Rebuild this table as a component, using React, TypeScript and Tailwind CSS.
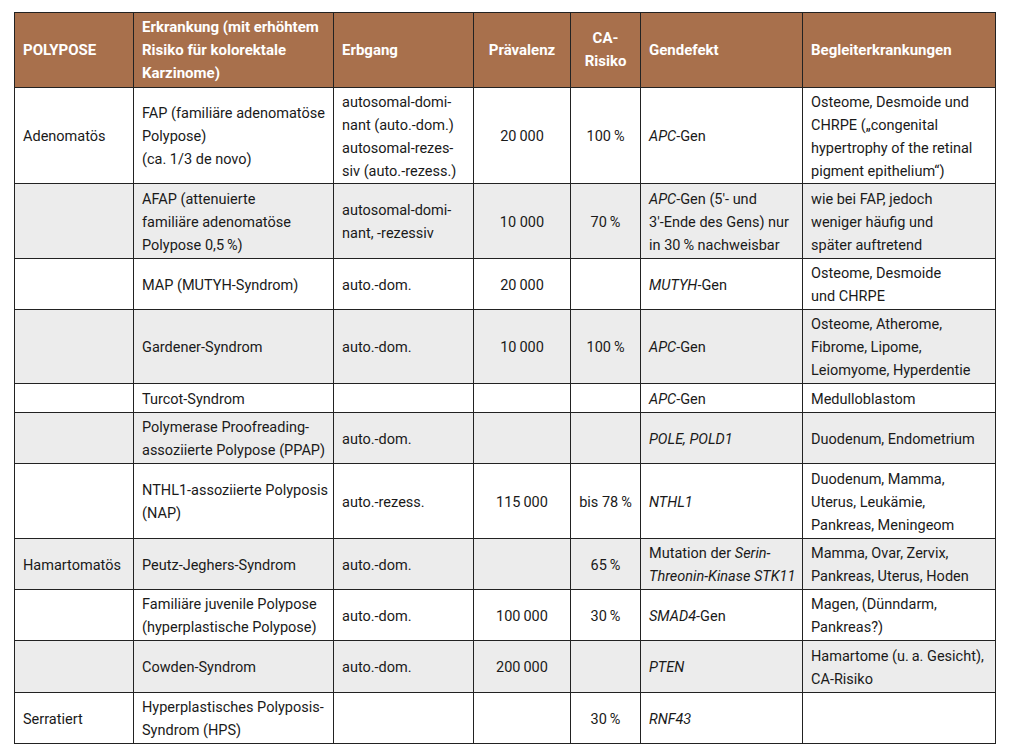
import type { ReactNode } from "react";

type Row = {
  h: number;
  gray: boolean;
  cells: ReactNode[];
};

const rows: Row[] = [
  {
    h: 96,
    gray: false,
    cells: [
      "Adenomatös",
      <>FAP (familiäre adenomatöse<br />Polypose)<br />(ca. 1/3 de novo)</>,
      <>autosomal-domi-<br />nant (auto.-dom.)<br />autosomal-rezes-<br />siv (auto.-rezess.)</>,
      "20\u2009000",
      "100\u2009%",
      <><i>APC</i>-Gen</>,
      <>Osteome, Desmoide und<br />CHRPE („congenital<br />hypertrophy of the retinal<br />pigment epithelium“)</>,
    ],
  },
  {
    h: 75,
    gray: true,
    cells: [
      "",
      <>AFAP (attenuierte<br />familiäre adenomatöse<br />Polypose 0,5&thinsp;%)</>,
      <>autosomal-domi-<br />nant, -rezessiv</>,
      "10 000",
      "70\u2009%",
      <><i>APC</i>-Gen (5'- und<br />3'-Ende des Gens) nur<br />in 30&thinsp;% nachweisbar</>,
      <>wie bei FAP, jedoch<br />weniger häufig und<br />später auftretend</>,
    ],
  },
  {
    h: 51,
    gray: false,
    cells: [
      "",
      "MAP (MUTYH-Syndrom)",
      "auto.-dom.",
      "20\u2009000",
      "",
      <><i>MUTYH</i>-Gen</>,
      <>Osteome, Desmoide<br />und CHRPE</>,
    ],
  },
  {
    h: 74,
    gray: true,
    cells: [
      "",
      "Gardener-Syndrom",
      "auto.-dom.",
      "10\u2009000",
      "100\u2009%",
      <><i>APC</i>-Gen</>,
      <>Osteome, Atherome,<br />Fibrome, Lipome,<br />Leiomyome, Hyperdentie</>,
    ],
  },
  {
    h: 29,
    gray: false,
    cells: ["", "Turcot-Syndrom", "", "", "", <><i>APC</i>-Gen</>, "Medulloblastom"],
  },
  {
    h: 51,
    gray: true,
    cells: [
      "",
      <>Polymerase Proofreading-<br />assoziierte Polypose (PPAP)</>,
      "auto.-dom.",
      "",
      "",
      <i>POLE, POLD1</i>,
      "Duodenum, Endometrium",
    ],
  },
  {
    h: 75,
    gray: false,
    cells: [
      "",
      <>NTHL1-assoziierte Polyposis<br />(NAP)</>,
      "auto.-rezess.",
      "115\u2009000",
      "bis 78\u2009%",
      <i>NTHL1</i>,
      <>Duodenum, Mamma,<br />Uterus, Leukämie,<br />Pankreas, Meningeom</>,
    ],
  },
  {
    h: 51,
    gray: true,
    cells: [
      "Hamartomatös",
      "Peutz-Jeghers-Syndrom",
      "auto.-dom.",
      "",
      "65\u2009%",
      <>Mutation der <i>Serin-</i><br /><i>Threonin-Kinase STK11</i></>,
      <>Mamma, Ovar, Zervix,<br />Pankreas, Uterus, Hoden</>,
    ],
  },
  {
    h: 51,
    gray: false,
    cells: [
      "",
      <>Familiäre juvenile Polypose<br />(hyperplastische Polypose)</>,
      "auto.-dom.",
      "100\u2009000",
      "30\u2009%",
      <><i>SMAD4</i>-Gen</>,
      <>Magen, (Dünndarm,<br />Pankreas?)</>,
    ],
  },
  {
    h: 52,
    gray: true,
    cells: [
      "",
      "Cowden-Syndrom",
      "auto.-dom.",
      "200\u2009000",
      "",
      <i>PTEN</i>,
      <>Hamartome (u.&thinsp;a. Gesicht),<br />CA-Risiko</>,
    ],
  },
  {
    h: 51,
    gray: false,
    cells: [
      "Serratiert",
      <>Hyperplastisches Polyposis-<br />Syndrom (HPS)</>,
      "",
      "",
      "30\u2009%",
      <i>RNF43</i>,
      "",
    ],
  },
];

const widths = [119, 200, 140, 97, 70, 162, 193];
const centered = [false, false, false, true, true, false, false];

export default function App() {
  return (
    <div className="w-[1024px] h-[754px] bg-white pt-[12px] pl-[14px] font-['Roboto',sans-serif] text-[14.5px] leading-[23px] text-[#1a1a1a]">
      <table className="table-fixed border-collapse w-[981px]">
        <colgroup>
          {widths.map((w, i) => (
            <col key={i} style={{ width: w }} />
          ))}
        </colgroup>
        <thead>
          <tr className="h-[75px] bg-[#a8704c] text-white text-[15px]">
            <th className="border border-[#222] px-2 text-left align-middle font-bold">POLYPOSE</th>
            <th className="border border-[#222] px-2 text-left align-middle font-bold">
              Erkrankung (mit erhöhtem Risiko für kolorektale Karzinome)
            </th>
            <th className="border border-[#222] px-2 text-left align-middle font-bold">Erbgang</th>
            <th className="border border-[#222] px-2 text-center align-middle font-bold">Prävalenz</th>
            <th className="border border-[#222] px-1 text-center align-middle font-bold">
              CA-<br />Risiko
            </th>
            <th className="border border-[#222] px-2 text-left align-middle font-bold">Gendefekt</th>
            <th className="border border-[#222] px-2 text-left align-middle font-bold">Begleiterkrankungen</th>
          </tr>
        </thead>
        <tbody>
          {rows.map((r, ri) => (
            <tr key={ri} className={r.gray ? "bg-[#ececec]" : "bg-white"} style={{ height: r.h }}>
              {r.cells.map((c, ci) => (
                <td
                  key={ci}
                  className={
                    centered[ci]
                      ? "border border-[#222] px-1 pt-[2px] pb-0 text-center align-middle whitespace-nowrap"
                      : "border border-[#222] px-2 pt-[2px] pb-0 text-left align-middle whitespace-nowrap"
                  }
                >
                  {c}
                </td>
              ))}
            </tr>
          ))}
        </tbody>
      </table>
    </div>
  );
}
